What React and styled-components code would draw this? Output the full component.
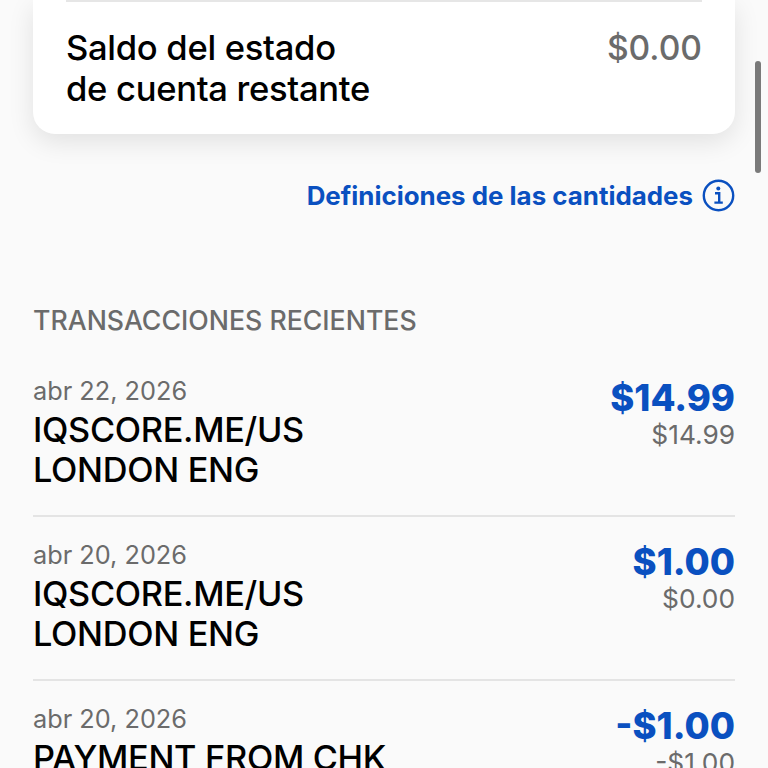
import styled, { createGlobalStyle } from "styled-components";

const transactions = [
  { date: "abr 22, 2026", name: ["IQSCORE.ME/US", "LONDON ENG"], amount: "$14.99", pending: "$14.99" },
  { date: "abr 20, 2026", name: ["IQSCORE.ME/US", "LONDON ENG"], amount: "$1.00", pending: "$0.00" },
  { date: "abr 20, 2026", name: ["PAYMENT FROM CHK"], amount: "-$1.00", pending: "-$1.00" },
];

export default function App() {
  return (
    <Page>
      <GlobalStyle />
      <Card>
        <CardDivider />
        <BalanceRow>
          <BalanceLabel>
            Saldo del estado
            <br />
            de cuenta restante
          </BalanceLabel>
          <BalanceValue>$0.00</BalanceValue>
        </BalanceRow>
      </Card>
      <DefinitionsLink>
        Definiciones de las cantidades
        <InfoIcon />
      </DefinitionsLink>
      <SectionTitle>TRANSACCIONES RECIENTES</SectionTitle>
      <List>
        {transactions.map((t, i) => (
          <Row key={i}>
            <RowLeft>
              <DateText>{t.date}</DateText>
              {t.name.map((line) => (
                <Merchant key={line}>{line}</Merchant>
              ))}
            </RowLeft>
            <RowRight>
              <Amount>{t.amount}</Amount>
              <Pending>{t.pending}</Pending>
            </RowRight>
          </Row>
        ))}
      </List>
      <Scrollbar />
    </Page>
  );
}

function InfoIcon() {
  return (
    <svg width="33" height="33" viewBox="0 0 33 33" fill="none">
      <circle cx="16.5" cy="16.5" r="14.7" stroke="#0a50c0" strokeWidth="2.4" />
      <circle cx="16.3" cy="9.6" r="2" fill="#0a50c0" />
      <path d="M13 14.2h4.2v9.2M12.4 23.6h8.4" stroke="#0a50c0" strokeWidth="2.4" />
    </svg>
  );
}

const GlobalStyle = createGlobalStyle`
  html, body {
    margin: 0;
    padding: 0;
    background: #fafafa;
  }
  * {
    box-sizing: border-box;
  }
`;

const Page = styled.div`
  position: relative;
  width: 768px;
  height: 768px;
  overflow: hidden;
  background: #fafafa;
  font-family: Inter, "Liberation Sans", sans-serif;
  color: #000;
`;

const Card = styled.div`
  margin: 0 33px;
  height: 134px;
  background: #fff;
  border-radius: 0 0 22px 22px;
  box-shadow: 0 8px 26px rgba(0, 0, 0, 0.1);
  padding: 0 33px;
`;

const CardDivider = styled.div`
  height: 2px;
  background: #e6e6e6;
`;

const BalanceRow = styled.div`
  display: flex;
  justify-content: space-between;
  align-items: flex-start;
  padding-top: 25px;
`;

const BalanceLabel = styled.div`
  font-size: 34.6px;
  font-weight: 500;
  line-height: 41px;
  letter-spacing: -0.3px;
`;

const BalanceValue = styled.div`
  font-size: 33.6px;
  font-weight: 500;
  line-height: 41px;
  color: #6b6b6b;
`;

const DefinitionsLink = styled.div`
  display: flex;
  justify-content: flex-end;
  align-items: center;
  gap: 9px;
  margin: 45px 33px 0;
  height: 33px;
  font-size: 25.9px;
  font-weight: 700;
  color: #0a50c0;
`;

const SectionTitle = styled.div`
  margin: 90px 33px 0;
  font-size: 26.7px;
  line-height: 36px;
  font-weight: 500;
  color: #6b6b6b;
`;

const List = styled.div`
  margin: 15px 33px 0;
`;

const Row = styled.div`
  display: flex;
  justify-content: space-between;
  align-items: flex-start;
  height: 164px;
  padding-top: 19px;
  border-bottom: 2px solid #e4e4e4;
  &:last-child {
    border-bottom: none;
  }
`;

const RowLeft = styled.div`
  display: flex;
  flex-direction: column;
`;

const DateText = styled.div`
  font-size: 25.3px;
  line-height: 38px;
  font-weight: 400;
  color: #6b6b6b;
`;

const Merchant = styled.div`
  font-size: 34.3px;
  line-height: 40px;
  font-weight: 500;
  letter-spacing: -0.3px;
`;

const RowRight = styled.div`
  display: flex;
  flex-direction: column;
  align-items: flex-end;
`;

const Amount = styled.div`
  font-size: 36.5px;
  line-height: 52px;
  font-weight: 800;
  color: #0a50c0;
`;

const Pending = styled.div`
  font-size: 26.3px;
  line-height: 22px;
  font-weight: 400;
  color: #6b6b6b;
`;

const Scrollbar = styled.div`
  position: absolute;
  top: 61px;
  left: 755px;
  width: 6px;
  height: 112px;
  border-radius: 3px;
  background: #7a7a7a;
`;
